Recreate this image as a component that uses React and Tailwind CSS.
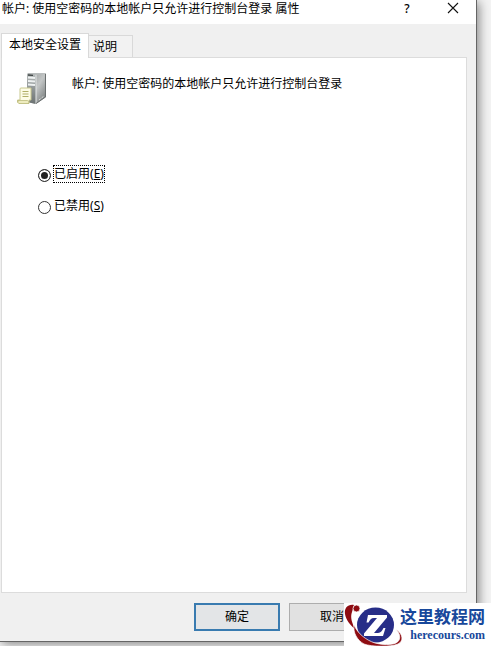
import { useState } from 'react';

function ServerIcon() {
  return (
    <svg width="32" height="34" viewBox="0 0 32 34" aria-hidden="true" className="shrink-0">
      <defs>
        <linearGradient id="side" x1="0" y1="0" x2="1" y2="1">
          <stop offset="0" stopColor="#8d9191" />
          <stop offset="0.5" stopColor="#c3c6c6" />
          <stop offset="1" stopColor="#6a6f6f" />
        </linearGradient>
        <linearGradient id="front" x1="0" y1="0" x2="0" y2="1">
          <stop offset="0" stopColor="#b4b9b9" />
          <stop offset="1" stopColor="#6c7272" />
        </linearGradient>
      </defs>
      <path d="M10 2 L12 1 L29 1 L29 25 L19 32 L10 30Z" fill="url(#side)" />
      <path d="M10 2 L19 3 L19 32 L10 30Z" fill="url(#front)" />
      <path d="M10 2 L13 1 L29 1 L19 3Z" fill="#b9bdbd" />
      <path d="M11 5.5 L18 6M11 9 L18 9.5M11 12.500 L18 13" stroke="#eef1f1" strokeWidth="1.800" />
      <path d="M11 3 L16 3.300" stroke="#3d4343" strokeWidth="1.300" />
      <path d="M19 3 V32" stroke="#e3e6e6" strokeWidth="1" />
      <path d="M28.500 2 V25 L19 31.500" fill="none" stroke="#6a6f6f" strokeWidth="1" />
      <path d="M22 28 L27 24" stroke="#eceeee" strokeDasharray="1 1" />
      <path d="M3 17 Q3 16 4 16 H14 V28 H12 V31 H1.500 Q0 31 .5 28 H3Z" fill="#fdfce6" stroke="#c9c88e" strokeWidth="1" />
      <path d="M5.500 19.500H11.500M5.500 22H11.500M5.500 24.500H11.500" stroke="#b1af68" strokeWidth="1" />
      <path d="M1 28.500H10.500Q12 29 12 31.500H2Q.5 31 1 28.500Z" fill="#eeecbf" stroke="#b5b36e" strokeWidth="0.700" />
    </svg>
  );
}

function SiteMark() {
  return (
    <svg width="60" height="43" viewBox="0 0 60 43" aria-hidden="true" className="shrink-0">
      <path
        d="M10 2 C4 1 0 5 1 11 C2 17 6 22 11 26 C8 20 6 14 8 9Z"
        fill="#8e0c12"
      />
      <circle cx="12.500" cy="5.500" r="3.500" fill="#8e0c12" stroke="#fff" strokeWidth="0.800" />
      <ellipse cx="31.500" cy="22" rx="18.500" ry="17.500" fill="#272e88" />
      <path
        d="M10 22 C14 31 22 37 31 40 C39 42 47 42 52 40 C57 37 57 32 52 26 C59 31 60 38 54 41 C47 44 28 44 20 41 C13 37 9 30 10 22Z"
        fill="#8e0c12"
        stroke="#fff"
        strokeWidth="0.700"
      />
      <path d="M24 12 L43 12 L43 14.500 L30 30 L34 30 C37 29.500 38 28 39.500 25 L41.500 25 L39 33 L20 33 L20 30.500 L33 15 L30 15 C27 15 26 17 24.500 19.500 L22.500 19.500Z" fill="#fff" />
    </svg>
  );
}

const options = [
  { value: 'enabled', text: '已启用', accessKey: 'E' },
  { value: 'disabled', text: '已禁用', accessKey: 'S' },
];

export default function App() {
  const [choice, setChoice] = useState('enabled');

  return (
    <div className="relative flex min-h-screen flex-col overflow-hidden bg-[#f3f3f3] pr-[14px] pb-1 font-['Noto_Sans','Noto_Sans_CJK_SC',sans-serif] text-xs text-black">
      <section
        role="dialog"
        aria-labelledby="dialog-title"
        className="flex flex-1 flex-col border-r border-b border-[#656565] bg-[#f0f0f0] shadow-[2px_2px_10px_rgba(0,0,0,0.45)]"
      >
        <header className="flex h-6 items-center bg-white pr-[17px] pb-1.5 pl-0.5">
          <h1 id="dialog-title" className="flex-1 whitespace-nowrap">
            帐户: 使用空密码的本地帐户只允许进行控制台登录 属性
          </h1>
          <button type="button" aria-label="帮助" className="w-4 text-center text-xs leading-4 font-medium">
            ?
          </button>
          <button type="button" aria-label="关闭" className="-mt-0.5 ml-8">
            <svg width="12" height="12" viewBox="0 0 12 12" aria-hidden="true">
              <path d="M1 1 L11 11 M11 1 L1 11" stroke="#111" strokeWidth="1.100" />
            </svg>
          </button>
        </header>

        <div className="flex flex-1 flex-col pt-[9px] pr-[9px] pl-px">
          <div role="tablist" className="flex items-end">
            <button
              type="button"
              role="tab"
              aria-selected="true"
              className="z-10 -mb-px h-[25px] w-[88px] border border-b-0 border-[#d9d9d9] bg-white pb-0.5 whitespace-nowrap"
            >
              本地安全设置
            </button>
            <button
              type="button"
              role="tab"
              aria-selected="false"
              className="h-[22px] border border-b-0 border-l-0 border-[#d9d9d9] bg-[#f2f2f2] pr-[15px] pl-1 whitespace-nowrap"
            >
              说明
            </button>
          </div>

          <div role="tabpanel" className="flex-1 border border-[#dcdcdc] bg-white pt-[14px] pl-[15px]">
            <div className="flex items-start gap-[23px]">
              <ServerIcon />
              <p className="pt-0.5 leading-5">帐户: 使用空密码的本地帐户只允许进行控制台登录</p>
            </div>
            <fieldset className="mt-[58px] flex flex-col items-start gap-3 pl-[21px]">
              {options.map((option) => (
                <label key={option.value} className="flex h-5 items-center gap-0.5">
                  <input
                    type="radio"
                    name="policy"
                    value={option.value}
                    checked={choice === option.value}
                    onChange={() => setChoice(option.value)}
                    className="mt-0.5 size-[13px] appearance-none rounded-full border border-[#333] bg-white checked:bg-[#222] checked:shadow-[inset_0_0_0_2px_white]"
                  />
                  <span
                    className={
                      choice === option.value
                        ? 'border border-dotted border-black leading-4'
                        : 'border border-transparent leading-4'
                    }
                  >
                    {option.text}(<u className="underline underline-offset-1">{option.accessKey}</u>)
                  </span>
                </label>
              ))}
            </fieldset>
          </div>
        </div>

        <footer className="flex justify-end gap-[9px] pt-[10px] pr-[101px] pb-[10px]">
          <button type="button" className="h-7 w-[86px] border-2 border-[#397bb0] bg-[#e3e5e7]">
            确定
          </button>
          <button type="button" className="h-7 w-[86px] border border-[#adadad] bg-[#e1e1e1]">
            取消
          </button>
        </footer>
      </section>

      <aside className="absolute right-0 bottom-0 z-20 flex h-[43px] w-[147px] bg-white">
        <SiteMark />
        <div className="-ml-1 flex flex-col items-end whitespace-nowrap text-[#18489b]">
          <span className="font-['Noto_Sans_CJK_SC',sans-serif] text-[17px] leading-[25px] font-bold">
            这里教程网
          </span>
          <span className="font-['Liberation_Serif',serif] text-xs leading-[14px] font-bold">herecours.com</span>
        </div>
      </aside>
    </div>
  );
}
